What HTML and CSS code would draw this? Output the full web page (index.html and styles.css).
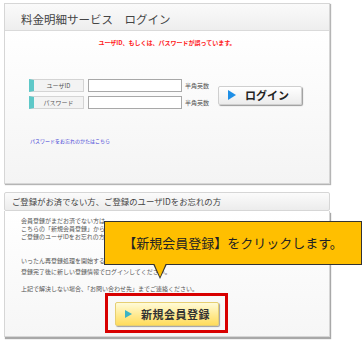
FILE: index.html
```html
<!DOCTYPE html>
<html lang="ja">
<head>
  <meta charset="UTF-8">
  <title>料金明細サービス ログイン</title>
  <link rel="stylesheet" href="styles.css">
</head>
<body>

  <div class="page">

    <div class="panel">
      <div class="panel-head">料金明細サービス　ログイン</div>
      <div class="panel-body">
        <p class="error">ユーザID、もしくは、パスワードが誤っています。</p>

        <div class="form">
          <div class="fields">
            <div class="row">
              <span class="label">ユーザID</span>
              <input type="text" class="field">
              <span class="hint">半角英数</span>
            </div>
            <div class="row">
              <span class="label">パスワード</span>
              <input type="password" class="field">
              <span class="hint">半角英数</span>
            </div>
          </div>
          <button class="btn-login"><span class="tri"></span>ログイン</button>
        </div>

        <a class="forgot" href="#">パスワードをお忘れのかたはこちら</a>
      </div>
    </div>

    <div class="reg-head">ご登録がお済でない方、ご登録のユーザIDをお忘れの方</div>
    <div class="reg-body">
      <p class="txt1">
        会員登録がまだお済でない方は、<br>
        こちらの「新規会員登録」から<br>
        ご登録のユーザIDをお忘れの方
      </p>
      <p class="txt2">
        いったん再登録処理を開始する<br>
        登録完了後に新しい登録情報でログインしてください。
      </p>
      <p class="txt3">上記で解決しない場合、「お問い合わせ先」までご連絡ください。</p>

      <div class="highlight">
        <button class="btn-reg"><span class="tri"></span>新規会員登録</button>
      </div>
    </div>

    <div class="callout">【新規会員登録】をクリックします。</div>

  </div>

</body>
</html>
```

FILE: styles.css
```css
body {
  margin: 0;
  background: #fff;
  font-family: "Noto Sans CJK JP", "DejaVu Sans", sans-serif;
  color: #444;
}

.page {
  position: relative;
  width: 364px;
  height: 342px;
  overflow: hidden;
  padding-top: 3px;
  box-sizing: border-box;
}

p {
  margin: 0;
}

/* ログイン */
.panel {
  margin-left: 4px;
  width: 326px;
  border: 1px solid #d6d6d6;
  box-shadow: 1px 1px 1px #b5b5b5;
  box-sizing: border-box;
}

.panel-head {
  height: 27px;
  padding: 3px 0 0 16px;
  box-sizing: border-box;
  line-height: 24px;
  font-size: 11.5px;
  color: #444;
  background: linear-gradient(#fafafa, #eeeeee);
  border-bottom: 1px solid #dadada;
}

.panel-body {
  height: 152px;
  padding: 8px 0 0 24px;
  box-sizing: border-box;
  background: linear-gradient(#ffffff, #f4f4f4);
}

.error {
  text-align: center;
  padding-right: 24px;
  font-size: 6px;
  line-height: 8px;
  font-weight: bold;
  color: #ff1a1a;
}

.form {
  display: flex;
  align-items: center;
  margin-top: 32px;
}

.fields {
  display: flex;
  flex-direction: column;
  gap: 4px;
}

.row {
  display: flex;
  align-items: center;
  height: 13px;
}

.label {
  width: 55px;
  height: 13px;
  box-sizing: border-box;
  border: 1px solid #d4d4d4;
  border-left: 5px solid #5ec8c8;
  background: #f3f3f3;
  font-size: 6px;
  line-height: 11px;
  text-align: center;
  color: #555;
}

.field {
  width: 94px;
  height: 13px;
  box-sizing: border-box;
  margin: 0 0 0 4px;
  padding: 0;
  border: 1px solid #a8a8a8;
  background: #fff;
}

.hint {
  margin-left: 3px;
  font-size: 6px;
  color: #555;
}

.btn-login {
  display: flex;
  align-items: center;
  gap: 9px;
  margin-left: 9px;
  margin-top: 2px;
  width: 84px;
  height: 19px;
  padding: 0 0 0 9px;
  border: 1px solid #cfcfcf;
  border-radius: 2px;
  background: linear-gradient(#ffffff, #ececec);
  box-shadow: 1px 1px 1px #9a9a9a;
  font-family: inherit;
  font-size: 11px;
  font-weight: bold;
  color: #222;
}

.btn-login .tri {
  width: 0;
  height: 0;
  border-top: 5px solid transparent;
  border-bottom: 5px solid transparent;
  border-left: 8px solid #1e8fe6;
}

.forgot {
  display: block;
  margin-top: 29px;
  padding-left: 1px;
  font-size: 5px;
  line-height: 6px;
  color: #3d3dd6;
  text-decoration: none;
}

/* 新規登録 */
.reg-head {
  margin: 8px 0 0 4px;
  width: 326px;
  height: 19px;
  box-sizing: border-box;
  border: 1px solid #d6d6d6;
  border-radius: 2px;
  background: linear-gradient(#fbfbfb, #ececec);
  padding-left: 7px;
  font-size: 8.4px;
  line-height: 17px;
  color: #444;
}

.reg-body {
  margin-left: 4px;
  width: 326px;
  height: 126px;
  box-sizing: border-box;
  border: 1px solid #d6d6d6;
  border-top: none;
  box-shadow: 1px 2px 1px #a8a8a8;
  padding: 6px 0 0 16px;
  background: linear-gradient(#ffffff, #f6f6f6);
  font-size: 6px;
  color: #555;
}

.txt1 {
  line-height: 8px;
}

.txt2 {
  margin-top: 14px;
  line-height: 11px;
}

.txt3 {
  margin-top: 8px;
  line-height: 8px;
}

.highlight {
  margin-left: 84px;
  width: 123px;
  height: 40px;
  box-sizing: border-box;
  border: 3px solid #d80000;
  padding: 6px 0 0 7px;
}

.btn-reg {
  display: flex;
  align-items: center;
  gap: 9px;
  width: 104px;
  height: 24px;
  padding: 0 0 0 9px;
  border: 1px solid #e6cf72;
  border-radius: 2px;
  background: linear-gradient(#fffbd8, #ffe88a 60%, #ffdc5c);
  box-shadow: 1px 1px 1px #a0a0a0;
  font-family: inherit;
  font-size: 11px;
  letter-spacing: 0.5px;
  font-weight: bold;
  color: #333;
}

.btn-reg .tri {
  width: 0;
  height: 0;
  border-top: 4px solid transparent;
  border-bottom: 4px solid transparent;
  border-left: 7px solid #3cb4c4;
}

/* 吹き出し */
.callout {
  position: absolute;
  left: 104px;
  top: 221px;
  width: 258px;
  height: 44px;
  box-sizing: border-box;
  border: 1px solid #333;
  background: #ffbf00;
  text-align: center;
  font-size: 13px;
  line-height: 42px;
  color: #222;
}

.callout::before,
.callout::after {
  content: "";
  position: absolute;
  width: 0;
  height: 0;
  border-left: 7px solid transparent;
  border-right: 7px solid transparent;
}

.callout::before {
  left: 48px;
  top: 42px;
  border-top: 15px solid #333;
}

.callout::after {
  left: 48px;
  top: 41px;
  border-left-width: 6px;
  border-right-width: 6px;
  margin-left: 1px;
  border-top: 14px solid #ffbf00;
}
```
